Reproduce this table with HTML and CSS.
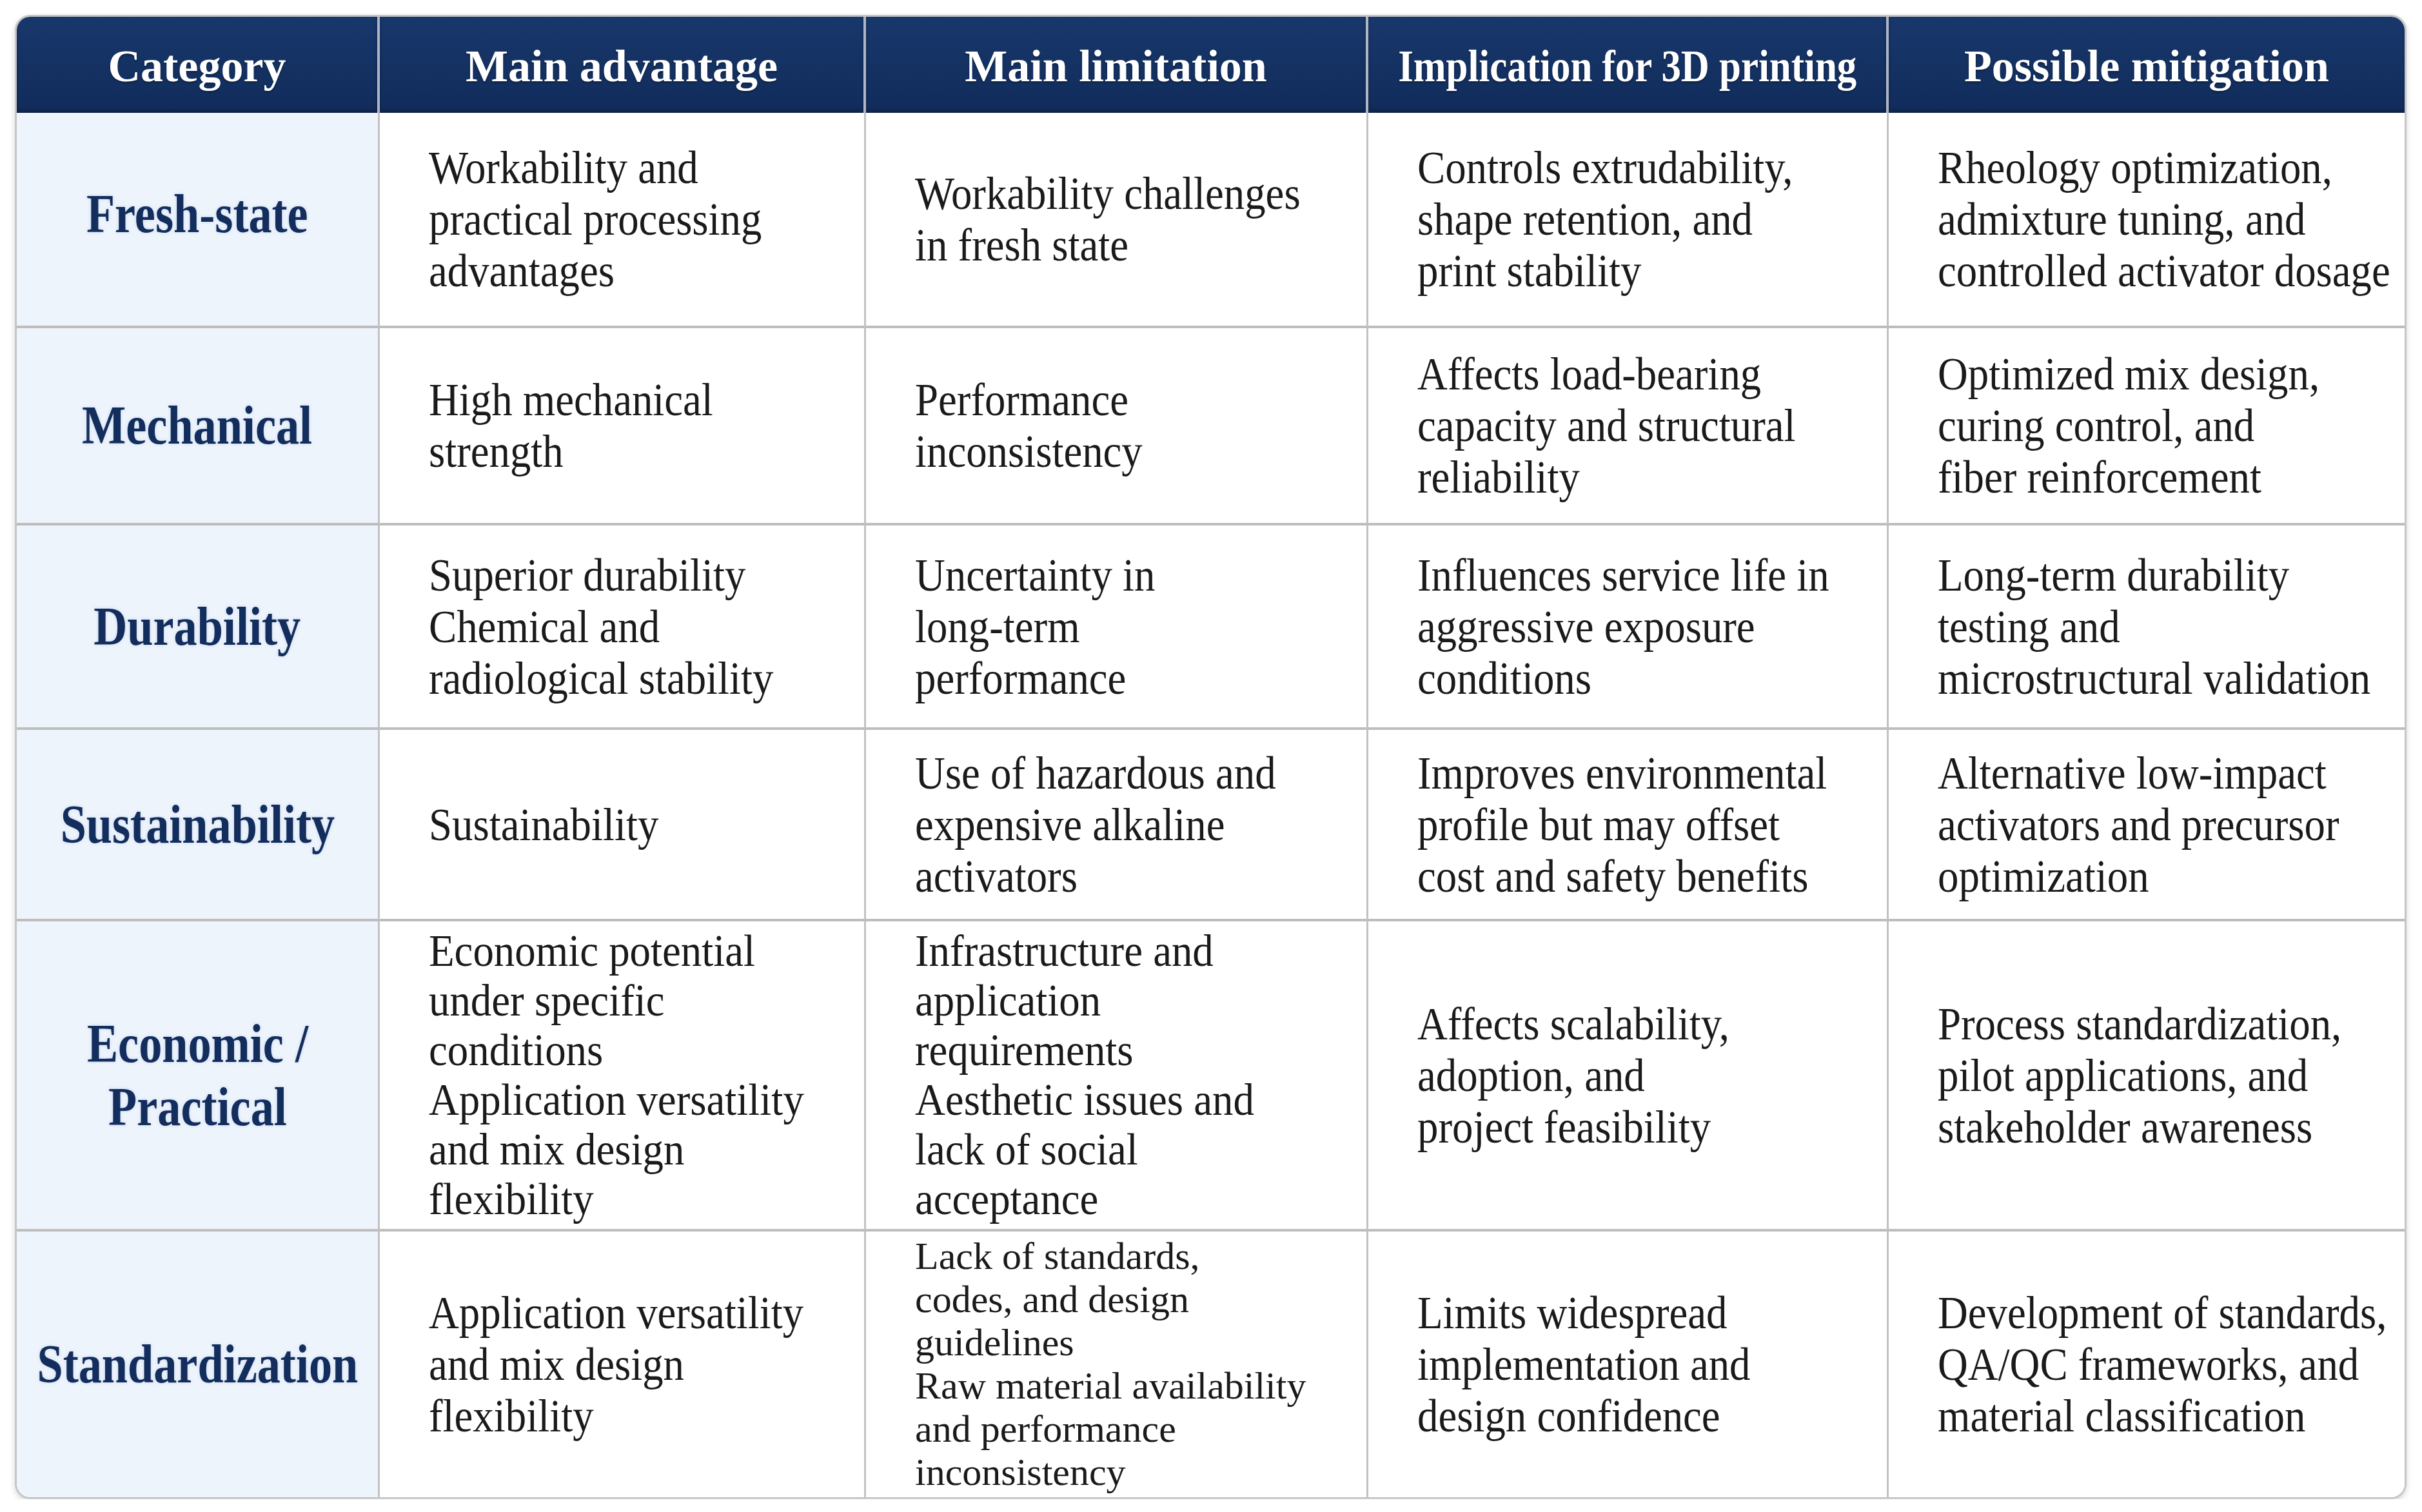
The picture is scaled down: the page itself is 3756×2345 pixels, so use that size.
FILE: index.html
```html
<!DOCTYPE html>
<html lang="en">
<head>
<meta charset="utf-8">
<title>Category comparison</title>
<link rel="stylesheet" href="styles.css">
</head>
<body>
<div class="table">
  <div class="hd"><span class="ht">Category</span></div>
  <div class="hd"><span class="ht">Main advantage</span></div>
  <div class="hd"><span class="ht">Main limitation</span></div>
  <div class="hd"><span class="ht narrow">Implication for 3D printing</span></div>
  <div class="hd last"><span class="ht">Possible mitigation</span></div>

  <div class="cat"><span class="ct up">Fresh-state</span></div>
  <div class="c"><span class="t">Workability and<br>practical processing<br>advantages</span></div>
  <div class="c"><span class="t">Workability challenges<br>in fresh state</span></div>
  <div class="c"><span class="t">Controls extrudability,<br>shape retention, and<br>print stability</span></div>
  <div class="c last"><span class="t">Rheology optimization,<br>admixture tuning, and<br>controlled activator dosage</span></div>

  <div class="cat"><span class="ct">Mechanical</span></div>
  <div class="c"><span class="t">High mechanical<br>strength</span></div>
  <div class="c"><span class="t">Performance<br>inconsistency</span></div>
  <div class="c"><span class="t">Affects load-bearing<br>capacity and structural<br>reliability</span></div>
  <div class="c last"><span class="t">Optimized mix design,<br>curing control, and<br>fiber reinforcement</span></div>

  <div class="cat"><span class="ct">Durability</span></div>
  <div class="c"><span class="t">Superior durability<br>Chemical and<br>radiological stability</span></div>
  <div class="c"><span class="t">Uncertainty in<br>long-term<br>performance</span></div>
  <div class="c"><span class="t">Influences service life in<br>aggressive exposure<br>conditions</span></div>
  <div class="c last"><span class="t">Long-term durability<br>testing and<br>microstructural validation</span></div>

  <div class="cat"><span class="ct">Sustainability</span></div>
  <div class="c"><span class="t">Sustainability</span></div>
  <div class="c"><span class="t">Use of hazardous and<br>expensive alkaline<br>activators</span></div>
  <div class="c"><span class="t">Improves environmental<br>profile but may offset<br>cost and safety benefits</span></div>
  <div class="c last"><span class="t">Alternative low-impact<br>activators and precursor<br>optimization</span></div>

  <div class="cat"><span class="ct">Economic /<br>Practical</span></div>
  <div class="c"><span class="t tight">Economic potential<br>under specific<br>conditions<br>Application versatility<br>and mix design<br>flexibility</span></div>
  <div class="c"><span class="t tight">Infrastructure and<br>application<br>requirements<br>Aesthetic issues and<br>lack of social<br>acceptance</span></div>
  <div class="c"><span class="t">Affects scalability,<br>adoption, and<br>project feasibility</span></div>
  <div class="c last"><span class="t">Process standardization,<br>pilot applications, and<br>stakeholder awareness</span></div>

  <div class="cat bottom"><span class="ct">Standardization</span></div>
  <div class="c bottom"><span class="t">Application versatility<br>and mix design<br>flexibility</span></div>
  <div class="c bottom"><span class="t small">Lack of standards,<br>codes, and design<br>guidelines<br>Raw material availability<br>and performance<br>inconsistency</span></div>
  <div class="c bottom"><span class="t">Limits widespread<br>implementation and<br>design confidence</span></div>
  <div class="c bottom last"><span class="t">Development of standards,<br>QA/QC frameworks, and<br>material classification</span></div>
</div>
</body>
</html>
```
FILE: styles.css
```css
html, body {
  margin: 0;
  padding: 0;
  background: #ffffff;
}

body {
  padding: 23px 0 0 23px;
  font-family: "Liberation Serif", "Times New Roman", serif;
}

.table {
  box-sizing: border-box;
  width: 3709px;
  display: grid;
  grid-template-columns: 563px 754px 779px 807px 800px;
  grid-template-rows: 149px 334px 306px 317px 297px 481px 412px;
  border: 3px solid #c6c6c6;
  border-radius: 24px;
  overflow: hidden;
  box-shadow: 0 4px 10px rgba(0, 0, 0, 0.16);
  background: #ffffff;
}

.hd {
  box-sizing: border-box;
  display: flex;
  align-items: center;
  justify-content: center;
  background: linear-gradient(#18376b, #112c5b);
  border-right: 4px solid #aeb6c4;
  box-shadow: inset 0 -4px 4px rgba(0, 0, 0, 0.25);
  color: #ffffff;
  font-weight: bold;
  font-size: 70px;
  padding-top: 4px;
}

.hd.last {
  border-right: none;
}

.ht {
  display: inline-block;
  white-space: nowrap;
  text-shadow: 0 2px 3px rgba(0, 0, 0, 0.35);
}

.ht.narrow {
  transform: scaleX(0.87);
}

.cat {
  box-sizing: border-box;
  display: flex;
  align-items: center;
  justify-content: center;
  background: #eef4fc;
  border-right: 3px solid #c2c2c2;
  border-bottom: 4px solid #bdbdbd;
  color: #132d5c;
  font-weight: bold;
  font-size: 84px;
  line-height: 98px;
  text-align: center;
}

.ct {
  display: inline-block;
  white-space: nowrap;
  transform: scaleX(0.86);
  text-shadow: 0 0 6px rgba(120, 160, 220, 0.35);
}

.ct.up {
  margin-bottom: 16px;
}

.c {
  box-sizing: border-box;
  display: flex;
  align-items: center;
  padding: 0 8px 0 76px;
  background: #ffffff;
  border-right: 3px solid #c2c2c2;
  border-bottom: 4px solid #bdbdbd;
  color: #1a1a1a;
  font-size: 72px;
  line-height: 80px;
}

.c.last {
  border-right: none;
}

.bottom {
  border-bottom: none;
}

.t {
  display: inline-block;
  white-space: nowrap;
  transform: scaleX(0.9);
  transform-origin: left center;
}

.t.tight {
  font-size: 69px;
  line-height: 77px;
  transform: scaleX(0.94);
}

.t.small {
  font-size: 60px;
  line-height: 67px;
  transform: none;
}
```
